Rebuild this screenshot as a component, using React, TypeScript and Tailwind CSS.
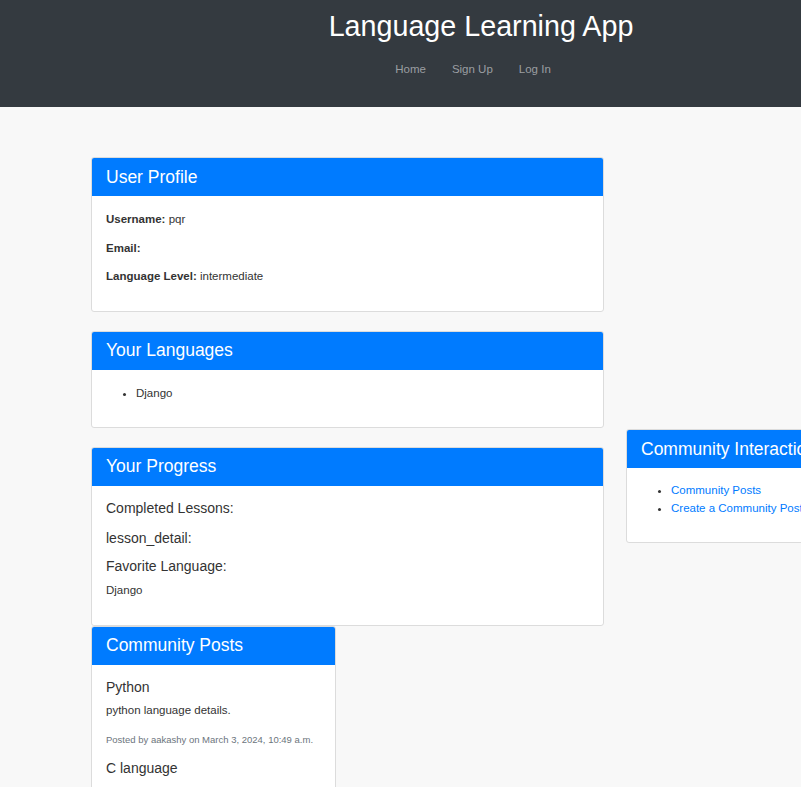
import React from 'react';

const font = { fontFamily: '"Liberation Sans", Arial, sans-serif' };

function Card({ title, className, children }: { title: string; className?: string; children: React.ReactNode }) {
  return (
    <div className={`overflow-hidden rounded-[3px] border border-[#dcdcdc] bg-white ${className ?? ''}`}>
      <div className="flex h-[38px] items-center bg-[#007bff] px-[14px] text-[17.5px] text-white">{title}</div>
      {children}
    </div>
  );
}

export default function App() {
  return (
    <div className="min-h-[787px] w-full overflow-hidden bg-[#f8f8f8] text-[#212529]" style={font}>
      <div className="w-[962px]">
        <header className="flex h-[107px] flex-col items-center bg-[#343a40]">
          <h1 className="mt-[9px] text-[28.7px] leading-[34px] text-white">Language Learning App</h1>
          <nav className="mt-[18px] mr-[16px] flex gap-[26px] text-[11.5px] leading-[16px] text-[#9b9ea2]">
            <a>Home</a>
            <a>Sign Up</a>
            <a>Log In</a>
          </nav>
        </header>

        <div className="flex items-start pt-[50px]">
          <div className="ml-[91px] flex w-[513px] flex-col">
            <Card title="User Profile">
              <div className="px-[14px] pt-[14px] pb-[15px] text-[11.5px] leading-[18px] text-[#333]">
                <p className="mb-[10.5px]"><b>Username:</b> pqr</p>
                <p className="mb-[10.5px]"><b>Email:</b> </p>
                <p className="mb-[10.5px]"><b>Language Level:</b> intermediate</p>
              </div>
            </Card>

            <Card title="Your Languages" className="mt-[19px]">
              <ul className="list-disc pt-[14px] pb-[25px] pl-[44px] text-[11.5px] leading-[18px] text-[#333]">
                <li>Django</li>
              </ul>
            </Card>

            <Card title="Your Progress" className="mt-[19px]">
              <div className="px-[14px] pt-[12px] pb-[26px] text-[#333]">
                <h5 className="mb-[10px] text-[14px] leading-[20px]">Completed Lessons:</h5>
                <h5 className="mb-[8px] text-[14px] leading-[20px]">lesson_detail:</h5>
                <h5 className="mb-[5px] text-[14px] leading-[20px]">Favorite Language:</h5>
                <p className="text-[11.5px] leading-[18px]">Django</p>
              </div>
            </Card>

            <Card title="Community Posts" className="w-[245px]">
              <div className="px-[14px] pt-[12px] pb-[16px] text-[#333]">
                <h5 className="mb-[4px] text-[14px] leading-[20px]">Python</h5>
                <p className="mb-[14px] text-[11.5px] leading-[18px]">python language details.</p>
                <p className="mb-[11px] text-[9.5px] leading-[14px] text-[#6c757d]">Posted by aakashy on March 3, 2024, 10:49 a.m.</p>
                <h5 className="text-[14px] leading-[20px]">C language</h5>
              </div>
            </Card>
          </div>

          <Card title="Community Interaction" className="mt-[272px] ml-[22px] w-[256px]">
            <ul className="list-disc pt-[13px] pb-[25px] pl-[44px] text-[11.5px] leading-[18px] text-[#007bff]">
              <li className="marker:text-[#333]"><a>Community Posts</a></li>
              <li className="marker:text-[#333]"><a>Create a Community Post</a></li>
            </ul>
          </Card>
        </div>
      </div>
    </div>
  );
}
